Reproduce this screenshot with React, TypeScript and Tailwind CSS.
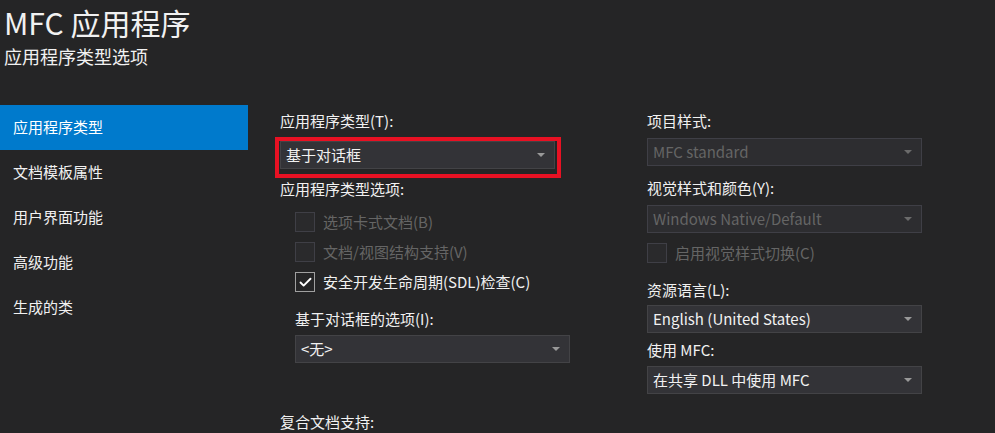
import { Check } from "lucide-react";

const font = "font-['Noto_Sans_CJK_SC','Noto_Sans',sans-serif]";

function Arrow({ dim }: { dim?: boolean }) {
  return (
    <svg width="8" height="4" viewBox="0 0 8 4" className="shrink-0">
      <path d="M0 0h8L4 4z" fill={dim ? "#6b6b6b" : "#999999"} />
    </svg>
  );
}

function Select({
  value,
  disabled,
  className = "",
}: {
  value: string;
  disabled?: boolean;
  className?: string;
}) {
  return (
    <div
      className={`flex h-[28px] items-center justify-between border pl-[5px] pr-[9px] text-[15px] ${
        disabled
          ? "border-[#3f3f46] bg-[#2d2d30] text-[#656565]"
          : "border-[#434346] bg-[#333337] text-[#f1f1f1]"
      } ${className}`}
    >
      <span>{value}</span>
      <Arrow dim={disabled} />
    </div>
  );
}

function CheckRow({
  label,
  checked,
  disabled,
}: {
  label: string;
  checked?: boolean;
  disabled?: boolean;
}) {
  return (
    <div className="flex h-5 items-center gap-[8px] text-[15px]">
      <div
        className={`flex h-5 w-5 items-center justify-center border ${
          disabled ? "border-[#3f3f46] bg-[#2a2a2c]" : "border-[#a0a0a0] bg-[#252526]"
        }`}
      >
        {checked && <Check size={15} strokeWidth={3} className="text-white" />}
      </div>
      <span className={disabled ? "text-[#656565]" : "text-[#f1f1f1]"}>{label}</span>
    </div>
  );
}

const navItems = ["应用程序类型", "文档模板属性", "用户界面功能", "高级功能", "生成的类"];

export default function App() {
  return (
    <div className={`h-[433px] w-[995px] overflow-hidden bg-[#252526] text-[#f1f1f1] ${font}`}>
      {/* 标题 */}
      <div className="pl-[4px] pt-[5px]">
        <h1 className="text-[30px] leading-[34px]">MFC 应用程序</h1>
        <p className="mt-[5px] text-[18px] leading-[24px]">应用程序类型选项</p>
      </div>

      <div className="mt-[37px] flex">
        {/* 左侧导航 */}
        <div className="w-[248px] shrink-0">
          {navItems.map((item, i) => (
            <div
              key={item}
              className={`flex h-[45px] items-center pl-[13px] text-[15px] ${
                i === 0 ? "bg-[#007acc] text-white" : ""
              }`}
            >
              {item}
            </div>
          ))}
        </div>

        {/* 第一列 */}
        <div className="ml-[32px] flex w-[275px] flex-col text-[15px]">
          <div className="mt-[6px] h-5 leading-5">应用程序类型(T):</div>
          <div className="relative mt-[10px]">
            <Select value="基于对话框" className="h-[27px]" />
            <div className="absolute -bottom-[9px] -left-[5px] -right-[6px] -top-[4px] border-4 border-[#e81123]" />
          </div>
          <div className="mt-[10px] h-5 leading-5">应用程序类型选项:</div>
          <div className="mt-[13px] flex flex-col gap-[10px] pl-[15px]">
            <CheckRow label="选项卡式文档(B)" disabled />
            <CheckRow label="文档/视图结构支持(V)" disabled />
            <CheckRow label="安全开发生命周期(SDL)检查(C)" checked />
          </div>
          <div className="mt-[17px] h-5 pl-[15px] leading-5">基于对话框的选项(I):</div>
          <Select value="<无>" className="ml-[15px] mt-[6px] w-[275px] shrink-0" />
          <div className="mt-[49px] h-5 leading-5">复合文档支持:</div>
        </div>

        {/* 第二列 */}
        <div className="ml-[92px] flex w-[275px] flex-col text-[15px]">
          <div className="mt-[6px] h-5 leading-5">项目样式:</div>
          <Select value="MFC standard" disabled className="mt-[7px]" />
          <div className="mt-[12px] h-5 leading-5">视觉样式和颜色(Y):</div>
          <Select value="Windows Native/Default" disabled className="mt-[7px]" />
          <div className="mt-[10px]">
            <CheckRow label="启用视觉样式切换(C)" disabled />
          </div>
          <div className="mt-[17px] h-5 leading-5">资源语言(L):</div>
          <Select value="English (United States)" className="mt-[5px]" />
          <div className="mt-[7px] h-5 leading-5">使用 MFC:</div>
          <Select value="在共享 DLL 中使用 MFC" className="mt-[6px]" />
        </div>
      </div>
    </div>
  );
}
